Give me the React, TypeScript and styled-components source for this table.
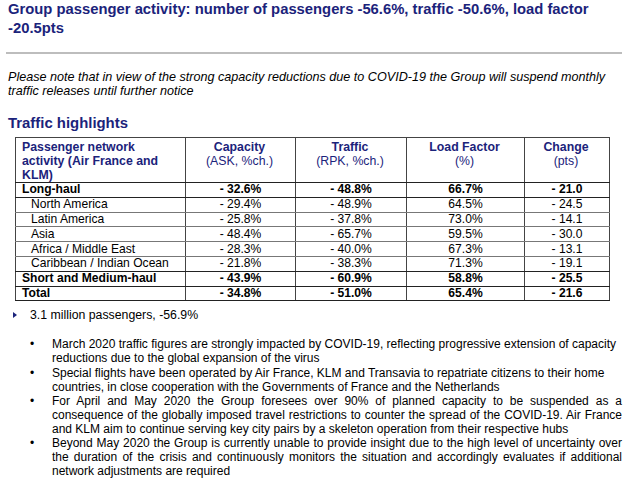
import React from "react";
import styled, { createGlobalStyle } from "styled-components";

const Global = createGlobalStyle`
  html, body { margin: 0; padding: 0; background: #fff; }
  body { font-family: "Liberation Sans", Arial, sans-serif; color: #000; }
`;

const Page = styled.div`
  width: 640px;
  height: 485px;
  overflow: hidden;
  padding: 0;
  box-sizing: border-box;
`;

const Title = styled.h1`
  margin: 0 0 0 8px;
  font-size: 14.8px;
  line-height: 19px;
  font-weight: bold;
  color: #1b237b;
  width: 600px;
`;

const Rule = styled.hr`
  margin: 14px 18px 0 6px;
  border: 0;
  height: 2px;
  background: #bdbdbd;
`;

const Note = styled.p`
  margin: 16px 0 0 8px;
  font-style: italic;
  font-size: 12.6px;
  line-height: 14px;
  width: 612px;
`;

const Heading = styled.h2`
  margin: 17px 0 0 8px;
  font-size: 14.9px;
  line-height: 17px;
  font-weight: bold;
  color: #1b237b;
`;

const Table = styled.table`
  margin: 5px 0 0 15px;
  border-collapse: collapse;
  width: 594px;
  table-layout: fixed;
  font-size: 12.1px;
`;

const Th = styled.th<{ $left?: boolean; $w: number }>`
  width: ${(p) => p.$w}px;
  box-sizing: border-box;
  border: 1px solid #444;
  border-bottom: 1px solid #222;
  color: #1b237b;
  font-size: 12.3px;
  text-align: ${(p) => (p.$left ? "left" : "center")};
  vertical-align: top;
  padding: 2px 8px 0 6px;
  height: 44px;
  line-height: 14px;
  font-weight: bold;
`;

const Sub = styled.span`
  display: block;
  font-weight: normal;
`;

const Tr = styled.tr<{ $bold?: boolean }>`
  font-weight: ${(p) => (p.$bold ? "bold" : "normal")};
`;

const Td = styled.td<{ $left?: boolean; $indent?: boolean; $strong?: boolean }>`
  border-left: 1px solid #444;
  border-right: 1px solid #444;
  border-bottom: ${(p) => (p.$strong ? "1px solid #222" : "1px solid #777")};
  padding: 0 ${(p) => (p.$left ? "4px" : "0")} 0 ${(p) => (p.$indent ? "15px" : p.$left ? "6px" : "0")};
  text-align: ${(p) => (p.$left ? "left" : "center")};
  height: 13.8px;
  line-height: 13px;
  white-space: nowrap;
`;

const Summary = styled.div`
  display: flex;
  align-items: center;
  margin: 7px 0 0 13px;
  font-size: 12.3px;
  line-height: 14px;
  gap: 13px;
`;

const Arrow = styled.span`
  width: 0;
  height: 0;
  border-top: 3.5px solid transparent;
  border-bottom: 3.5px solid transparent;
  border-left: 4px solid #1b237b;
`;

const List = styled.ul`
  list-style: none;
  margin: 15px 0 0 0;
  padding: 0 0 0 30px;
  width: 592px;
`;

const Item = styled.li`
  display: flex;
  font-size: 12px;
  line-height: 14.1px;
`;

const Dot = styled.span`
  flex: 0 0 22px;
  &::before {
    content: "•";
    font-size: 12px;
  }
`;

const ItemText = styled.span<{ $justify?: boolean }>`
  flex: 1;
  text-align: ${(p) => (p.$justify ? "justify" : "left")};
`;

type Row = { name: string; cap: string; tr: string; lf: string; ch: string; bold?: boolean; indent?: boolean; strong?: boolean };

const rows: Row[] = [
  { name: "Long-haul", cap: "- 32.6%", tr: "- 48.8%", lf: "66.7%", ch: "- 21.0", bold: true, strong: true },
  { name: "North America", cap: "- 29.4%", tr: "- 48.9%", lf: "64.5%", ch: "- 24.5", indent: true },
  { name: "Latin America", cap: "- 25.8%", tr: "- 37.8%", lf: "73.0%", ch: "- 14.1", indent: true },
  { name: "Asia", cap: "- 48.4%", tr: "- 65.7%", lf: "59.5%", ch: "- 30.0", indent: true },
  { name: "Africa / Middle East", cap: "- 28.3%", tr: "- 40.0%", lf: "67.3%", ch: "- 13.1", indent: true },
  { name: "Caribbean / Indian Ocean", cap: "- 21.8%", tr: "- 38.3%", lf: "71.3%", ch: "- 19.1", indent: true, strong: true },
  { name: "Short and Medium-haul", cap: "- 43.9%", tr: "- 60.9%", lf: "58.8%", ch: "- 25.5", bold: true, strong: true },
  { name: "Total", cap: "- 34.8%", tr: "- 51.0%", lf: "65.4%", ch: "- 21.6", bold: true, strong: true },
];

const bullets: { text: string; justify?: boolean }[] = [
  { text: "March 2020 traffic figures are strongly impacted by COVID-19, reflecting progressive extension of capacity reductions due to the global expansion of the virus" },
  { text: "Special flights have been operated by Air France, KLM and Transavia to repatriate citizens to their home countries, in close cooperation with the Governments of France and the Netherlands" },
  { text: "For April and May 2020 the Group foresees over 90% of planned capacity to be suspended as a consequence of the globally imposed travel restrictions to counter the spread of the COVID-19. Air France and KLM aim to continue serving key city pairs by a skeleton operation from their respective hubs", justify: true },
  { text: "Beyond May 2020 the Group is currently unable to provide insight due to the high level of uncertainty over the duration of the crisis and continuously monitors the situation and accordingly evaluates if additional network adjustments are required", justify: true },
];

export default function App() {
  return (
    <Page>
      <Global />
      <Title>Group passenger activity: number of passengers -56.6%, traffic -50.6%, load factor -20.5pts</Title>
      <Rule />
      <Note>
        Please note that in view of the strong capacity reductions due to COVID-19 the Group will suspend monthly traffic releases until further notice
      </Note>
      <Heading>Traffic highlights</Heading>
      <Table>
        <thead>
          <tr>
            <Th $left $w={170}>Passenger network activity (Air France and KLM)</Th>
            <Th $w={110}>Capacity<Sub>(ASK, %ch.)</Sub></Th>
            <Th $w={111}>Traffic<Sub>(RPK, %ch.)</Sub></Th>
            <Th $w={118}>Load Factor<Sub>(%)</Sub></Th>
            <Th $w={85}>Change<Sub>(pts)</Sub></Th>
          </tr>
        </thead>
        <tbody>
          {rows.map((r) => (
            <Tr key={r.name} $bold={r.bold}>
              <Td $left $indent={r.indent} $strong={r.strong}>{r.name}</Td>
              <Td $strong={r.strong}>{r.cap}</Td>
              <Td $strong={r.strong}>{r.tr}</Td>
              <Td $strong={r.strong}>{r.lf}</Td>
              <Td $strong={r.strong}>{r.ch}</Td>
            </Tr>
          ))}
        </tbody>
      </Table>
      <Summary>
        <Arrow />
        <span>3.1 million passengers, -56.9%</span>
      </Summary>
      <List>
        {bullets.map((b, i) => (
          <Item key={i}>
            <Dot />
            <ItemText $justify={b.justify}>{b.text}</ItemText>
          </Item>
        ))}
      </List>
    </Page>
  );
}
